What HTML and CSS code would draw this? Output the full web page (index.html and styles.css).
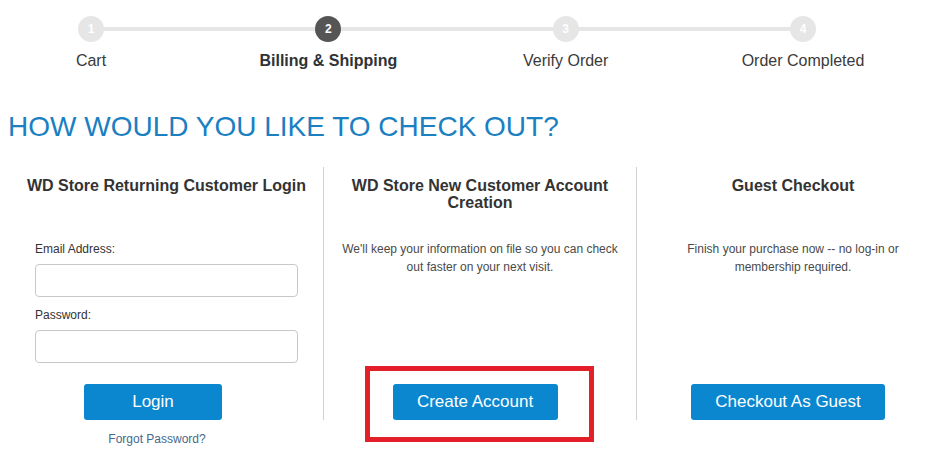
FILE: index.html
```html
<!DOCTYPE html>
<html lang="en">
<head>
<meta charset="utf-8">
<title>Checkout</title>
<link rel="stylesheet" href="styles.css">
</head>
<body>
<div class="page">
  <ol class="steps">
    <li class="step"><span class="dot">1</span><span class="step-label">Cart</span></li>
    <li class="step step-active"><span class="dot">2</span><span class="step-label">Billing &amp; Shipping</span></li>
    <li class="step"><span class="dot">3</span><span class="step-label">Verify Order</span></li>
    <li class="step"><span class="dot">4</span><span class="step-label">Order Completed</span></li>
  </ol>

  <h1 class="title">HOW WOULD YOU LIKE TO CHECK OUT?</h1>

  <div class="options">
    <section class="col col-login">
      <h2 class="col-title">WD Store Returning Customer Login</h2>
      <label class="field-label" for="email">Email Address:</label>
      <input class="field" id="email" type="text">
      <label class="field-label" for="pw">Password:</label>
      <input class="field" id="pw" type="password">
      <button class="btn btn-login" type="button">Login</button>
    </section>
    <section class="col">
      <h2 class="col-title">WD Store New Customer Account Creation</h2>
      <p class="desc">We'll keep your information on file so you can check<br>out faster on your next visit.</p>
      <div class="btn-wrap">
        <button class="btn btn-create" type="button">Create Account</button>
        <span class="highlight"></span>
      </div>
    </section>
    <section class="col">
      <h2 class="col-title">Guest Checkout</h2>
      <p class="desc">Finish your purchase now -- no log-in or<br>membership required.</p>
      <div class="btn-wrap">
        <button class="btn btn-guest" type="button">Checkout As Guest</button>
      </div>
    </section>
  </div>

  <div class="forgot-row"><a class="forgot" href="#">Forgot Password?</a></div>
</div>
</body>
</html>
```

FILE: styles.css
```css
html, body {
  margin: 0;
  padding: 0;
  background: #fff;
  overflow: hidden;
}
body {
  font-family: "Liberation Sans", Arial, sans-serif;
  color: #333;
}
.page {
  width: 933px;
  height: 468px;
  overflow: hidden;
}

/* stepper */
.steps {
  list-style: none;
  margin: 0 0 0 1px;
  padding: 16px 0 0;
  width: 892px;
  display: flex;
  justify-content: space-between;
  position: relative;
}
.steps::before {
  content: "";
  position: absolute;
  left: 90px;
  width: 712px;
  top: 27px;
  height: 4px;
  background: #e6e6e6;
}
.step {
  width: 180px;
  display: flex;
  flex-direction: column;
  align-items: center;
}
.dot {
  position: relative;
  z-index: 1;
  width: 26px;
  height: 26px;
  border-radius: 50%;
  background: #e6e6e6;
  color: #fff;
  font-size: 12px;
  font-weight: bold;
  line-height: 26px;
  text-align: center;
}
.step-label {
  margin-top: 10px;
  font-size: 16px;
  line-height: 18px;
  color: #3a3a3a;
  white-space: nowrap;
}
.step-active .dot {
  background: #555;
}
.step-active .step-label {
  font-weight: bold;
  color: #2f3337;
}

/* title */
.title {
  margin: 41px 0 0 8px;
  font-size: 28px;
  font-weight: normal;
  line-height: 32px;
  color: #1a80c2;
}

/* options */
.options {
  display: flex;
  margin: 24px 0 0 10px;
  width: 939px;
}
.col {
  box-sizing: border-box;
  width: 313px;
  padding: 10px 0 0;
  display: flex;
  flex-direction: column;
  align-items: center;
}
.col + .col {
  border-left: 1px solid #d0d0d0;
}
.col-login {
  padding: 10px 25px 0;
  align-items: stretch;
}
.col-title {
  margin: 0 0 29px;
  min-height: 34px;
  font-size: 16px;
  line-height: 17px;
  font-weight: bold;
  text-align: center;
  color: #333;
  padding: 0 25px;
}
.col-login .col-title {
  padding: 0;
  margin-left: -25px;
  margin-right: -25px;
  white-space: nowrap;
}
.field-label {
  display: block;
  font-size: 12px;
  line-height: 18px;
  color: #333;
  margin-bottom: 6px;
}
.field {
  box-sizing: border-box;
  display: block;
  width: 100%;
  height: 33px;
  margin: 0 0 9px;
  border: 1px solid #c8c8c8;
  border-radius: 4px;
  background: #fff;
}
#pw {
  margin-bottom: 21px;
}
.desc {
  margin: 0;
  font-size: 12px;
  line-height: 18px;
  color: #4a4a4a;
  text-align: center;
}
.btn-wrap {
  margin-top: auto;
  margin-right: 10px;
  position: relative;
}
.btn {
  display: block;
  height: 36px;
  border: none;
  border-radius: 3px;
  background: #0a87cf;
  color: #fff;
  font-family: "Liberation Sans", Arial, sans-serif;
  font-size: 17px;
  padding: 0;
  cursor: pointer;
}
.btn-login {
  width: 138px;
  margin-left: 49px;
}
.btn-create {
  width: 165px;
}
.btn-guest {
  width: 194px;
}
.highlight {
  position: absolute;
  left: -28px;
  top: -18px;
  width: 229px;
  height: 76px;
  box-sizing: border-box;
  border: 5px solid #e3202a;
  pointer-events: none;
}

/* forgot */
.forgot-row {
  box-sizing: border-box;
  width: 313px;
  margin: 10px 0 0 10px;
  padding-right: 19px;
  text-align: center;
  font-size: 12px;
  line-height: 18px;
}
.forgot {
  color: #46698c;
  text-decoration: none;
}
```
